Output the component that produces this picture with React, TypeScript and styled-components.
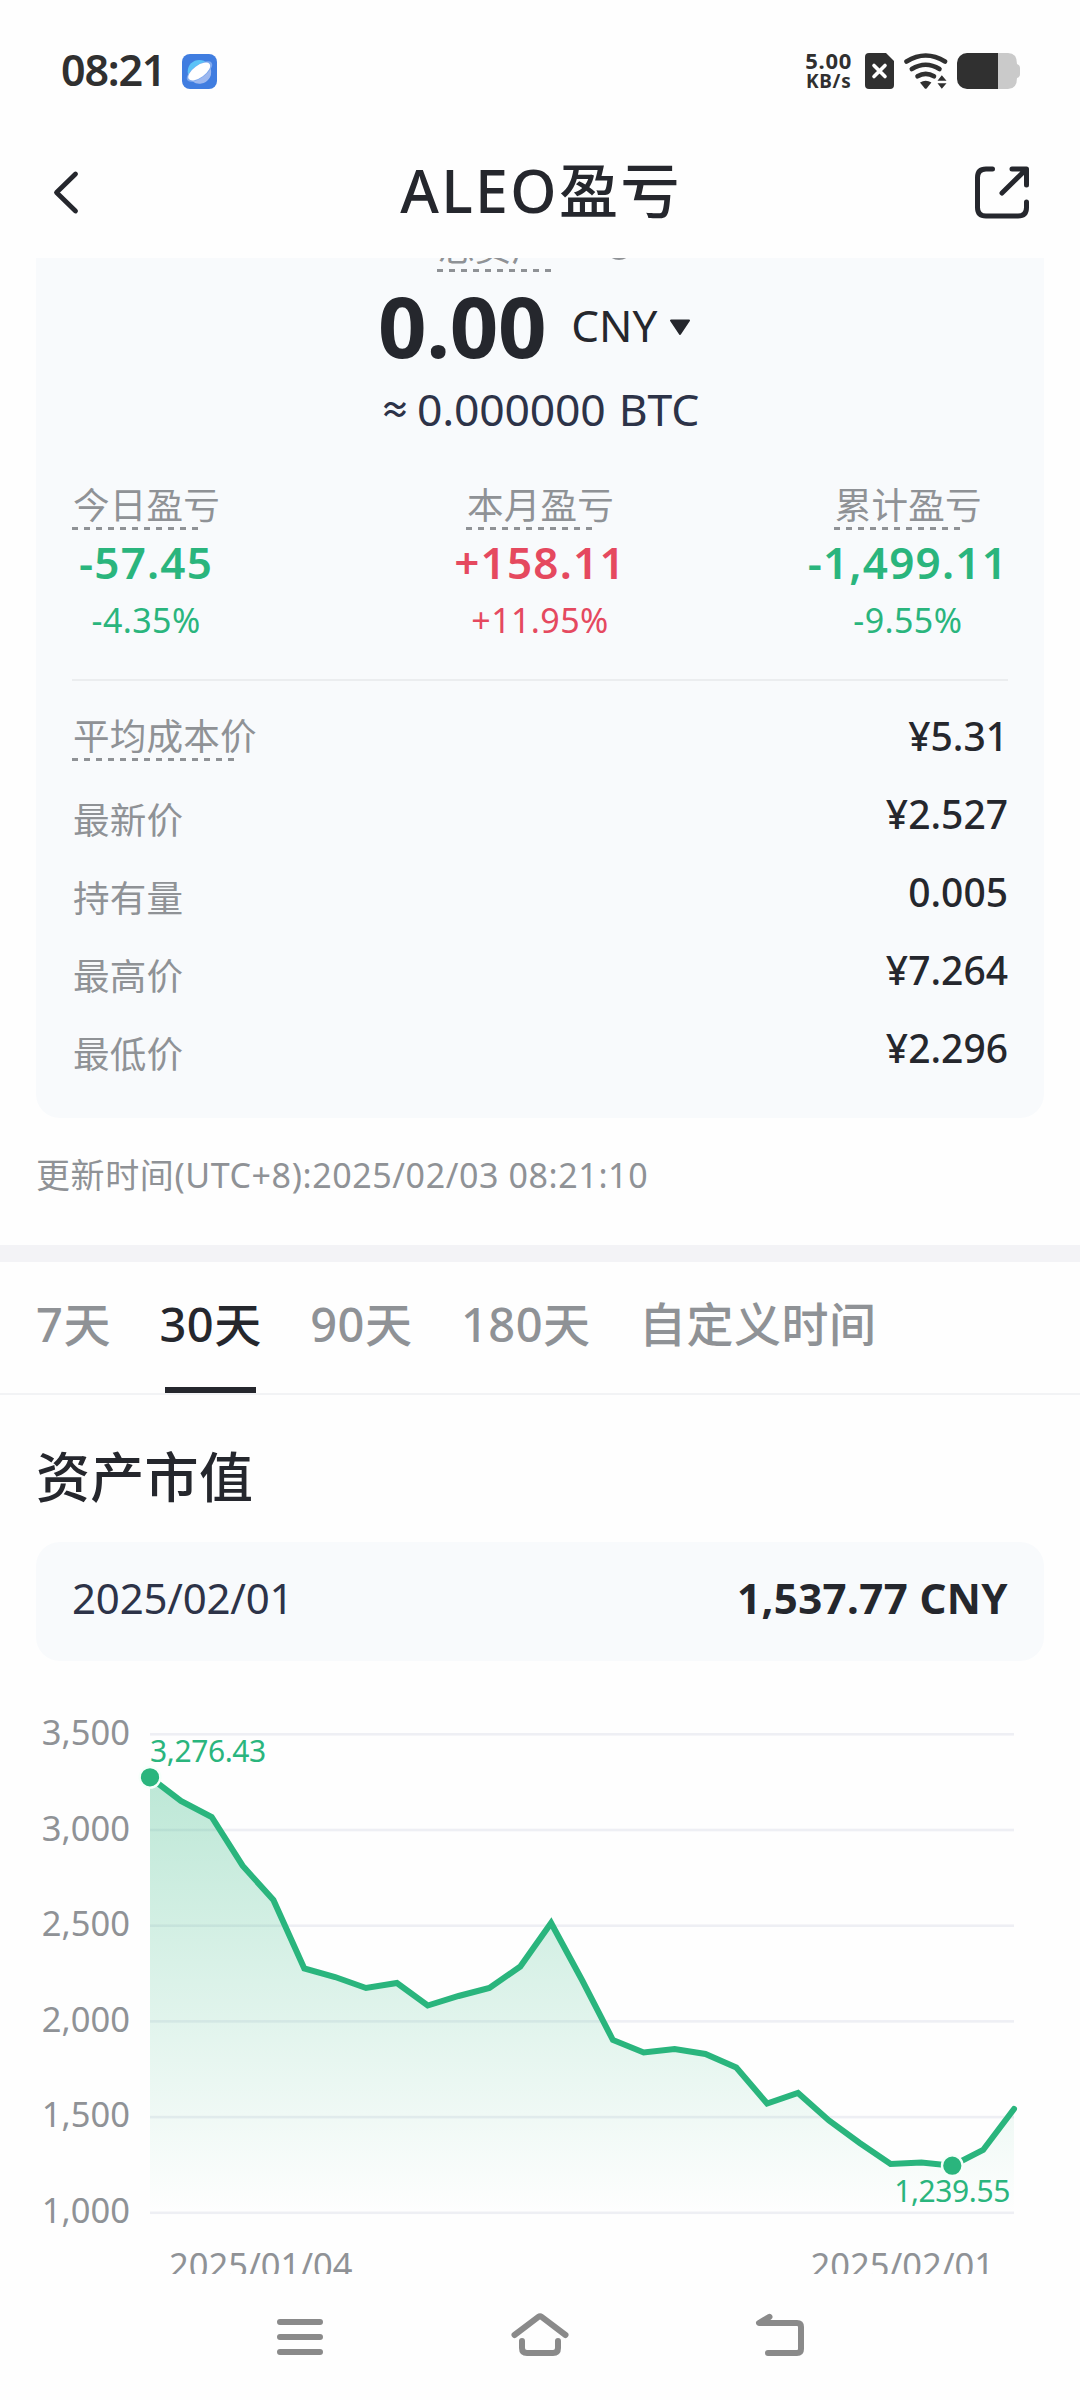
import React from "react";
import styled, { createGlobalStyle } from "styled-components";

const INK = "#25272d";
const MUTED = "#8f9296";
const GREEN = "#2ab57d";
const RED = "#e5495f";
const PANEL = "#f8fafc";
const FONT = `"Noto Sans", "Noto Sans CJK SC", sans-serif`;

const GlobalStyle = createGlobalStyle`
  * { box-sizing: border-box; }
  body { margin: 0; background: #fefefe; }
`;

const Screen = styled.div`
  display: flex;
  flex-direction: column;
  width: 1080px;
  height: 2400px;
  overflow: hidden;
  background: #fefefe;
  color: ${INK};
  font-family: ${FONT};
  white-space: nowrap;
`;

const StatusBar = styled.header`
  display: flex;
  align-items: center;
  justify-content: space-between;
  height: 88px;
  margin-top: 27px;
  padding: 0 60px 0 61px;
  color: #303030;
`;

const StatusGroup = styled.div<{ $gap: number }>`
  display: flex;
  align-items: center;
  gap: ${(p) => p.$gap}px;
`;

const Clock = styled.span`
  font-size: 43px;
  line-height: 60px;
  font-weight: 600;
  letter-spacing: -1.2px;
  margin-top: -2px;
`;

const NetRate = styled.div`
  display: flex;
  flex-direction: column;
  align-items: center;
  font-weight: 700;
  font-size: 22px;
  line-height: 21px;
  letter-spacing: 0.7px;
  margin-right: 3px;
`;

const RateUnit = styled.span`
  font-size: 19px;
`;

const TitleBar = styled.div`
  display: flex;
  align-items: center;
  justify-content: space-between;
  height: 143px;
  padding: 0 48px;
  flex: none;
`;

const ShareIcon = styled.svg`
  margin-top: 9px;
`;

const Title = styled.h1`
  margin: 6px 0 0 26px;
  font-size: 59px;
  line-height: 80px;
  font-weight: 500;
  letter-spacing: 2.4px;
`;

const Viewport = styled.main`
  height: 2016px;
  flex: none;
  overflow: hidden;
`;

const Scrolled = styled.div`
  display: flex;
  flex-direction: column;
  margin-top: -58px;
`;

const SummaryCard = styled.section`
  display: flex;
  flex-direction: column;
  height: 918px;
  margin: 0 36px;
  padding: 26px 36px 0;
  border-radius: 24px;
  background: ${PANEL};
`;

const AssetLabelRow = styled.div`
  display: flex;
  justify-content: center;
  align-items: flex-start;
  gap: 54px;
  padding-right: 10px;
`;

const LabelText = styled.span`
  padding-left: 1px;
  font-size: 36.6px;
  line-height: 43px;
  letter-spacing: 0.2px;
  color: ${MUTED};
`;

const DashedLabel = styled.div<{ $dashes: number }>`
  display: flex;
  flex-direction: column;
  height: 46px;
  &::after {
    content: "";
    width: ${(p) => p.$dashes * 12 - 6}px;
    height: 3px;
    background: repeating-linear-gradient(90deg, ${MUTED} 0 6px, transparent 6px 12px);
  }
`;

const InfoDot = styled.span`
  width: 28px;
  height: 28px;
  margin-top: 6px;
  border: 3px solid ${MUTED};
  border-radius: 50%;
`;

const BalanceRow = styled.div`
  display: flex;
  align-items: center;
  height: 88px;
  margin-top: 9px;
  padding-left: 306px;
`;

const Balance = styled.strong`
  font-size: 85px;
  line-height: 88px;
  font-weight: 700;
  letter-spacing: -0.4px;
`;

const Currency = styled.span`
  display: flex;
  align-items: center;
  gap: 12px;
  margin-left: 25px;
  font-size: 44px;
  line-height: 60px;
  svg {
    margin-top: 5px;
  }
`;

const BtcLine = styled.div`
  display: flex;
  height: 56px;
  margin-top: 12px;
  padding-left: 308px;
  font-size: 44.5px;
  line-height: 56px;
  color: #2d3348;
  letter-spacing: -0.2px;
  word-spacing: 2px;
`;

const Approx = styled.span`
  width: 37px;
  font-size: 30px;
  font-weight: 600;
`;

const Stats = styled.div`
  display: grid;
  grid-template-columns: 1fr auto 1fr;
  margin-top: 47px;
  > :first-child {
    justify-self: start;
  }
  > :last-child {
    justify-self: end;
  }
`;

const Stat = styled.div<{ $color: string }>`
  display: flex;
  flex-direction: column;
  align-items: center;
  color: ${(p) => p.$color};
`;

const StatValue = styled.span`
  margin-top: 6px;
  font-size: 44px;
  line-height: 52px;
  font-weight: 600;
  letter-spacing: 1.2px;
`;

const StatPercent = styled.span`
  margin-top: 12px;
  font-size: 34px;
  line-height: 40px;
  letter-spacing: 0.4px;
`;

const Divider = styled.hr`
  width: 100%;
  height: 2px;
  margin: 39px 0 16px;
  border: 0;
  background: #ebedef;
`;

const Row = styled.div`
  display: flex;
  justify-content: space-between;
  align-items: center;
  height: 78px;
`;

const RowLabel = styled.div<{ $drop: number }>`
  display: flex;
  padding-top: ${(p) => p.$drop}px;
`;

const RowValue = styled.span`
  font-size: 39px;
  line-height: 50px;
  font-weight: 500;
`;

const Updated = styled.p`
  margin: 33px 36px 46px;
  font-size: 34px;
  line-height: 48px;
  letter-spacing: 0.6px;
  color: ${MUTED};
`;

const Band = styled.div`
  height: 17px;
  background: #f3f3f6;
`;

const Tabs = styled.nav`
  display: flex;
  gap: 48.5px;
  height: 133px;
  padding: 32px 36px 0;
  border-bottom: 2px solid #f2f3f5;
`;

const Tab = styled.div<{ $active: boolean }>`
  display: flex;
  flex-direction: column;
  align-items: center;
  font-size: 47px;
  line-height: 60px;
  font-weight: 500;
  letter-spacing: 0.5px;
  color: ${(p) => (p.$active ? INK : MUTED)};
  &::after {
    content: "";
    width: 91px;
    height: 6px;
    margin-top: 33px;
    display: ${(p) => (p.$active ? "block" : "none")};
    background: ${INK};
  }
`;

const SectionTitle = styled.h2`
  margin: 50px 36px 33px;
  font-size: 54px;
  line-height: 64px;
  font-weight: 500;
  letter-spacing: 0.3px;
`;

const PointCard = styled.div`
  display: flex;
  justify-content: space-between;
  align-items: center;
  height: 119px;
  margin: 0 36px;
  padding: 0 36px 8px;
  border-radius: 24px;
  background: ${PANEL};
  font-size: 42px;
`;

const PointDate = styled.span`
  color: #2d3348;
  letter-spacing: -0.2px;
`;

const PointValue = styled.strong`
  font-weight: 700;
  letter-spacing: 0.4px;
`;

const Chart = styled.svg`
  display: block;
  width: 1080px;
  height: 640px;
  font-family: ${FONT};
`;

const AxisText = styled.text`
  font-size: 34.5px;
  fill: ${MUTED};
`;

const MarkText = styled.text`
  font-size: 30px;
  fill: ${GREEN};
  letter-spacing: -0.4px;
`;

const SystemNav = styled.footer`
  display: flex;
  align-items: center;
  justify-content: center;
  gap: 180px;
  height: 126px;
`;

const CHART_TOP = 1661;
const SERIES = [
  1777.3, 1801, 1817, 1865.7, 1900, 1968.5, 1977, 1988, 1983, 2005.5, 1996, 1988, 1966.5, 1923, 1980, 2040,
  2052.5, 2049, 2054, 2067.5, 2103.5, 2093, 2120.5, 2143, 2164, 2162.5, 2165.7, 2150, 2109,
].map((y, i) => [150 + (i * 864) / 28, y - CHART_TOP]);
const LINE = SERIES.map(([x, y]) => `${x.toFixed(1)},${y.toFixed(1)}`).join(" ");
const TICKS = ["3,500", "3,000", "2,500", "2,000", "1,500", "1,000"];

const STATS = [
  { label: "今日盈亏", value: "-57.45", percent: "-4.35%", color: GREEN },
  { label: "本月盈亏", value: "+158.11", percent: "+11.95%", color: RED },
  { label: "累计盈亏", value: "-1,499.11", percent: "-9.55%", color: GREEN },
];

const ROWS = [
  { label: "平均成本价", value: "¥5.31", dashed: true },
  { label: "最新价", value: "¥2.527" },
  { label: "持有量", value: "0.005" },
  { label: "最高价", value: "¥7.264" },
  { label: "最低价", value: "¥2.296" },
];

const TABS = ["7天", "30天", "90天", "180天", "自定义时间"];

function AppBadge() {
  return (
    <svg width="35" height="35" viewBox="0 0 35 35">
      <rect width="35" height="35" rx="8" fill="#407de0" />
      <circle cx="17.3" cy="17.5" r="11.6" fill="#5cc3f7" />
      <path d="M5.8 20 A11.6 11.6 0 0 0 29 16 L26 12 Z" fill="#9db8ef" />
      <ellipse cx="17.5" cy="17.5" rx="15" ry="6.4" transform="rotate(-36 17.5 17.5)" fill="#7fa9ee" />
      <ellipse cx="17.2" cy="17.5" rx="12.8" ry="6" transform="rotate(-36 17.2 17.5)" fill="#fff" />
    </svg>
  );
}

function StatusIcons() {
  return (
    <svg width="155" height="36" viewBox="865 53 155 36">
      <path d="M869 53 H886 L894 61 V85 a4 4 0 0 1 -4 4 H869 a4 4 0 0 1 -4 -4 V57 a4 4 0 0 1 4 -4Z" fill="#303030" />
      <path d="M874 65.5 L885 76.5 M885 65.5 L874 76.5" stroke="#fff" strokeWidth="3.6" strokeLinecap="round" />
      <g fill="none" stroke="#303030" strokeWidth="4.6" strokeLinecap="round">
        <path d="M906.5 61.5 Q925.7 49.5 945 61.5" />
        <path d="M911.8 69 Q925.7 60.5 939.5 69" />
        <path d="M917.5 76.3 Q925.7 71.3 934 76.3" />
      </g>
      <path d="M920 82.6 Q925.7 79 931.4 82.6 L926.8 88.3 Q925.7 89.4 924.6 88.3Z" fill="#303030" />
      <path d="M937.5 80.8 L941.8 75.2 L946.5 80.8Z M937.5 83.2 H946.5 L941.8 88.8Z" fill="#303030" />
      <path d="M967 53 H998 V89 H967 a10 10 0 0 1 -10 -10 V63 a10 10 0 0 1 10 -10Z" fill="#303030" />
      <path d="M998 53 H1008 Q1017 53 1017 64 Q1020 65 1020 68 V74 Q1020 77 1017 78 Q1017 89 1008 89 H998Z" fill="#cacaca" />
    </svg>
  );
}

export default function App() {
  return (
    <Screen>
      <GlobalStyle />
      <StatusBar>
        <StatusGroup $gap={17}>
          <Clock>08:21</Clock>
          <AppBadge />
        </StatusGroup>
        <StatusGroup $gap={10}>
          <NetRate>
            <span>5.00</span>
            <RateUnit>KB/s</RateUnit>
          </NetRate>
          <StatusIcons />
        </StatusGroup>
      </StatusBar>

      <TitleBar>
        <svg width="36" height="60" viewBox="48 156.5 36 60">
          <path d="M75.500 173.500 L56.500 192 L75.500 210.500" fill="none" stroke={INK} strokeWidth="4.800" strokeLinecap="round" strokeLinejoin="round" />
        </svg>
        <Title>ALEO盈亏</Title>
        <ShareIcon width="60" height="60" viewBox="972 157 60 60">
          <g fill="none" stroke={INK} strokeWidth="5" strokeLinecap="round" strokeLinejoin="round">
            <path d="M992.500 165 H986 Q977.500 165 977.500 173.500 V203.500 Q977.500 212 986 212 H1018 Q1026.500 212 1026.500 203.500 V198" />
            <path d="M1012 165 H1026.500 V181 M1026 165.500 L1002 189" />
          </g>
        </ShareIcon>
      </TitleBar>

      <Viewport>
        <Scrolled>
          <SummaryCard>
            <AssetLabelRow>
              <DashedLabel $dashes={10}>
                <LabelText>总资产</LabelText>
              </DashedLabel>
              <InfoDot />
            </AssetLabelRow>
            <BalanceRow>
              <Balance>0.00</Balance>
              <Currency>
                CNY
                <svg width="22" height="17" viewBox="0 0 22 17">
                  <path d="M2 1.500 H20 L11 15Z" fill={INK} stroke={INK} strokeWidth="2" strokeLinejoin="round" />
                </svg>
              </Currency>
            </BalanceRow>
            <BtcLine>
              <Approx>≈</Approx>
              0.000000 BTC
            </BtcLine>
            <Stats>
              {STATS.map((s) => (
                <Stat key={s.label} $color={s.color}>
                  <DashedLabel $dashes={11}>
                    <LabelText>{s.label}</LabelText>
                  </DashedLabel>
                  <StatValue>{s.value}</StatValue>
                  <StatPercent>{s.percent}</StatPercent>
                </Stat>
              ))}
            </Stats>
            <Divider />
            {ROWS.map((r) => (
              <Row key={r.label}>
                <RowLabel $drop={r.dashed ? 4 : 13}>
                  {r.dashed ? (
                    <DashedLabel $dashes={14}>
                      <LabelText>{r.label}</LabelText>
                    </DashedLabel>
                  ) : (
                    <LabelText>{r.label}</LabelText>
                  )}
                </RowLabel>
                <RowValue>{r.value}</RowValue>
              </Row>
            ))}
          </SummaryCard>

          <Updated>更新时间(UTC+8):2025/02/03 08:21:10</Updated>
          <Band />
          <Tabs>
            {TABS.map((t) => (
              <Tab key={t} $active={t === "30天"}>
                {t}
              </Tab>
            ))}
          </Tabs>

          <SectionTitle>资产市值</SectionTitle>
          <PointCard>
            <PointDate>2025/02/01</PointDate>
            <PointValue>1,537.77 CNY</PointValue>
          </PointCard>

          <Chart viewBox="0 0 1080 640">
            <defs>
              <linearGradient id="area" x1="0" y1="116" x2="0" y2="552" gradientUnits="userSpaceOnUse">
                <stop offset="0" stopColor={GREEN} stopOpacity="0.31" />
                <stop offset="1" stopColor={GREEN} stopOpacity="0" />
              </linearGradient>
            </defs>
            {TICKS.map((t, i) => (
              <g key={t}>
                <rect x="150" y={72 + i * 95.7} width="864" height="2.6" fill="#eeeff4" />
                <AxisText x="130" y={84.3 + i * 95.5} textAnchor="end">
                  {t}
                </AxisText>
              </g>
            ))}
            <polygon points={`150,552 ${LINE} 1014,552`} fill="url(#area)" />
            <polyline points={LINE} fill="none" stroke={GREEN} strokeWidth="6" strokeLinecap="round" strokeLinejoin="miter" />
            {[0, 26].map((i) => (
              <circle key={i} cx={SERIES[i][0]} cy={SERIES[i][1]} r="10.300" fill={GREEN} stroke="#f6fffa" strokeWidth="2.400" />
            ))}
            <MarkText x="150" y="101">3,276.43</MarkText>
            <MarkText x="1010" y="541" textAnchor="end">1,239.55</MarkText>
            <AxisText x="169" y="617">2025/01/04</AxisText>
            <AxisText x="994" y="617" textAnchor="end">2025/02/01</AxisText>
          </Chart>
        </Scrolled>
      </Viewport>

      <SystemNav>
        <svg width="60" height="50" viewBox="270 2312 60 50">
          <path d="M280 2322 H320 M280 2337 H320 M280 2352 H320" stroke="#8a8a8a" strokeWidth="6" strokeLinecap="round" />
        </svg>
        <svg width="60" height="50" viewBox="510 2311 60 50">
          <path d="M514.500 2334 L538.400 2315.800 Q540 2314.600 541.600 2315.800 L565.500 2334 M522 2340 V2347 Q522 2352 527 2352 H553 Q558 2352 558 2347 V2340" fill="none" stroke="#8a8a8a" strokeWidth="6" strokeLinecap="round" />
        </svg>
        <svg width="60" height="50" viewBox="750 2311 60 50">
          <path d="M769.500 2315.800 L759 2322 H797 Q801 2322 801 2326 V2348 Q801 2352 797 2352 H768" fill="none" stroke="#8a8a8a" strokeWidth="6" strokeLinecap="round" strokeLinejoin="round" />
        </svg>
      </SystemNav>
    </Screen>
  );
}
